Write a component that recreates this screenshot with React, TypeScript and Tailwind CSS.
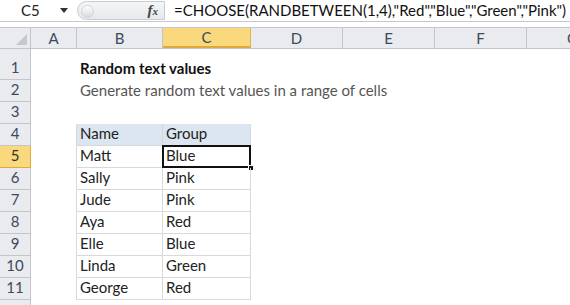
import React from 'react';

const COLS = ['A', 'B', 'C', 'D', 'E', 'F', 'G'];
const COL_W = ['w-[46px]', 'w-[86px]', 'w-[88px]', 'w-[92px]', 'w-[92px]', 'w-[92px]', 'w-[92px]'];

const people: [string, string][] = [
  ['Matt', 'Blue'],
  ['Sally', 'Pink'],
  ['Jude', 'Pink'],
  ['Aya', 'Red'],
  ['Elle', 'Blue'],
  ['Linda', 'Green'],
  ['George', 'Red'],
];

const font = { fontFamily: 'Lato, "Liberation Sans", sans-serif' };

function FormulaBar() {
  return (
    <div className="flex h-[22px] items-stretch border-b border-[#c8c8c8] bg-white">
      {/* name box */}
      <div className="flex w-[77px] items-center justify-between pl-[21px] pr-[9px] text-[15px] text-[#222]">
        <span>C5</span>
        <svg width="8" height="5" viewBox="0 0 8 5">
          <path d="M0 0 L8 0 L4 5 Z" fill="#333" />
        </svg>
      </div>
      {/* grey pill with fx */}
      <div className="relative my-[1px] flex w-[88px] items-center justify-end rounded-l-full border border-[#c9cdd3] bg-gradient-to-b from-[#f4f5f7] to-[#e6e8eb] pr-[6px]">
        <div className="absolute left-[3px] top-[3px] h-[13px] w-[13px] rounded-full border border-[#d0d3d8] bg-gradient-to-b from-[#ffffff] to-[#d7dadf]" />
        <span className="text-[15px] font-bold italic text-[#444]" style={{ fontFamily: '"Liberation Serif", serif' }}>
          f<span className="text-[11px]">x</span>
        </span>
      </div>
      <div className="flex flex-1 items-center overflow-hidden whitespace-nowrap pl-[9px] text-[15px] text-[#111]">
        =CHOOSE(RANDBETWEEN(1,4),"Red","Blue","Green","Pink")
      </div>
    </div>
  );
}

function ColumnHeaders() {
  return (
    <div className="flex h-[22px] overflow-hidden border-y border-[#c2c5ca] bg-[#e9ebee] text-[15px] text-[#3b4a5e]">
      <div className="relative w-[31px] shrink-0 border-r border-[#c2c5ca]">
        <svg className="absolute bottom-[3px] right-[3px]" width="11" height="11" viewBox="0 0 11 11">
          <path d="M11 0 L11 11 L0 11 Z" fill="#c4c7cc" />
        </svg>
      </div>
      {COLS.map((c, i) => (
        <div
          key={c}
          className={`${COL_W[i]} flex shrink-0 items-center justify-center border-r ${
            c === 'C' ? 'border-[#e3b64a] border-b-2 border-b-[#e0a93a] bg-[#f9d97c]' : 'border-[#c2c5ca]'
          }`}
        >
          {c}
        </div>
      ))}
    </div>
  );
}

function RowHeader({ n, tall }: { n?: number; tall?: boolean }) {
  const active = n === 5;
  return (
    <div
      className={`flex w-[31px] shrink-0 items-end justify-center border-b border-r pb-[1px] text-[15px] ${
        tall ? 'h-[31px]' : 'h-[22px]'
      } ${active ? 'border-[#e0a93a] bg-[#f9d97c] text-[#333]' : 'border-[#c2c5ca] bg-[#e9ebee] text-[#3b4a5e]'}`}
    >
      {n}
    </div>
  );
}

function Cell({ w, children, className = '' }: { w: string; children?: React.ReactNode; className?: string }) {
  return <div className={`${w} flex shrink-0 items-end whitespace-nowrap pb-[1px] pl-[3px] ${className}`}>{children}</div>;
}

export default function App() {
  return (
    <div className="h-[305px] w-[570px] overflow-hidden bg-white" style={font}>
      <FormulaBar />
      <div className="h-[5px] bg-white" />
      <ColumnHeaders />

      {/* row 1 */}
      <div className="flex h-[31px]">
        <RowHeader n={1} tall />
        <Cell w="w-[46px]" />
        <Cell w="w-[200px]" className="text-[15px] font-bold text-[#111]">
          Random text values
        </Cell>
      </div>
      {/* row 2 */}
      <div className="flex h-[22px]">
        <RowHeader n={2} />
        <Cell w="w-[46px]" />
        <Cell w="w-[400px]" className="text-[15px] text-[#555]">
          Generate random text values in a range of cells
        </Cell>
      </div>
      {/* row 3 */}
      <div className="flex h-[22px]">
        <RowHeader n={3} />
      </div>
      {/* row 4 table header */}
      <div className="flex h-[22px] text-[15px] text-[#222]">
        <RowHeader n={4} />
        <Cell w="w-[46px]" className="border-r border-[#d5d9de]" />
        <Cell w="w-[86px]" className="border-b border-r border-[#d5d9de] bg-[#dce6f1]">
          Name
        </Cell>
        <Cell w="w-[88px]" className="border-b border-r border-[#d5d9de] bg-[#dce6f1]">
          Group
        </Cell>
      </div>
      {people.map(([name, group], i) => {
        const row = i + 5;
        const active = row === 5;
        return (
          <div key={name} className="flex h-[22px] text-[15px] text-[#222]">
            <RowHeader n={row} />
            <Cell w="w-[46px]" className="border-r border-[#d9d9d9]" />
            <Cell w="w-[86px]" className="border-b border-r border-[#d9d9d9]">
              {name}
            </Cell>
            <Cell w="w-[88px]" className="relative border-b border-r border-[#d9d9d9]">
              {group}
              {active && (
                <>
                  <div className="absolute bottom-[-1px] left-[-1px] right-[-1px] top-[-1px] border-2 border-[#111]" />
                  <div className="absolute bottom-[-4px] right-[-4px] h-[6px] w-[6px] border border-white bg-[#111]" />
                </>
              )}
            </Cell>
          </div>
        );
      })}
      {/* row 12, only its top edge shows */}
      <div className="flex h-[22px]">
        <RowHeader />
      </div>
    </div>
  );
}
